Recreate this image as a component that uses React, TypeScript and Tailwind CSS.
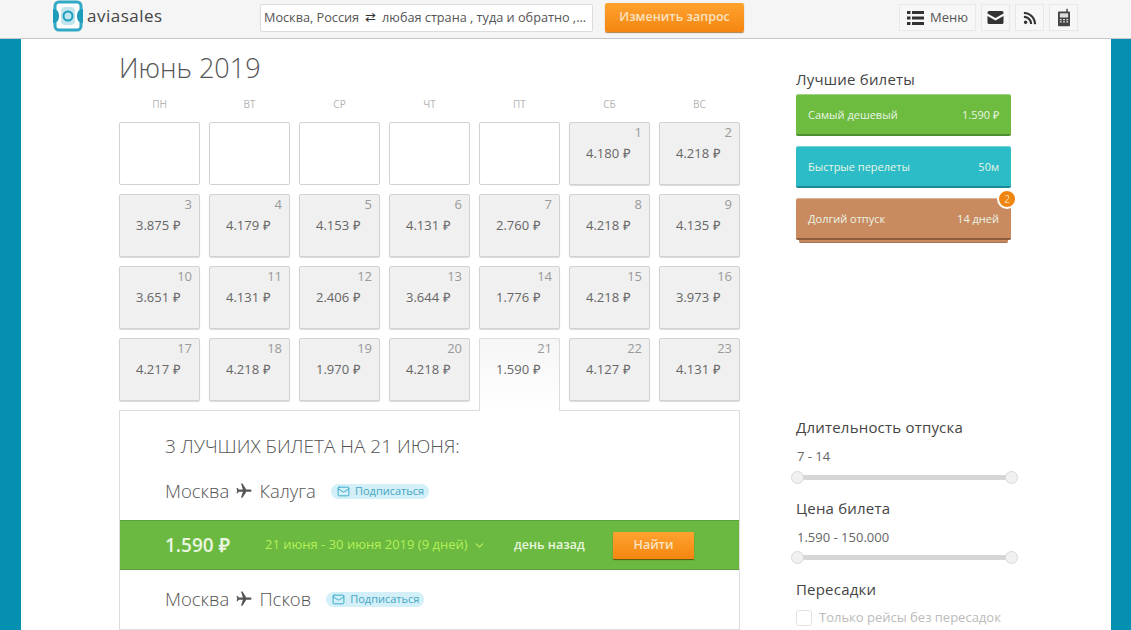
import { ChevronDown, Mail } from 'lucide-react';
import { FaRss } from 'react-icons/fa';
import { MdFlight } from 'react-icons/md';

const weekDays = ['ПН', 'ВТ', 'СР', 'ЧТ', 'ПТ', 'СБ', 'ВС'];

type Day = { day: number; price: string; active?: boolean };

const days: Day[] = [
  { day: 1, price: '4.180' },
  { day: 2, price: '4.218' },
  { day: 3, price: '3.875' },
  { day: 4, price: '4.179' },
  { day: 5, price: '4.153' },
  { day: 6, price: '4.131' },
  { day: 7, price: '2.760' },
  { day: 8, price: '4.218' },
  { day: 9, price: '4.135' },
  { day: 10, price: '3.651' },
  { day: 11, price: '4.131' },
  { day: 12, price: '2.406' },
  { day: 13, price: '3.644' },
  { day: 14, price: '1.776' },
  { day: 15, price: '4.218' },
  { day: 16, price: '3.973' },
  { day: 17, price: '4.217' },
  { day: 18, price: '4.218' },
  { day: 19, price: '1.970' },
  { day: 20, price: '4.218' },
  { day: 21, price: '1.590', active: true },
  { day: 22, price: '4.127' },
  { day: 23, price: '4.131' },
];

function Logo() {
  return (
    <svg width="30" height="32" viewBox="0 0 30 32" className="shrink-0">
      <rect x="2" y="2" width="26" height="28" rx="4" fill="#fff" stroke="#2fa9c6" strokeWidth="3" />
      <rect x="8" y="7" width="14" height="18" rx="4" fill="#bfe6ef" />
      <circle cx="15" cy="16" r="4.500" fill="none" stroke="#1d9cbb" strokeWidth="2" />
      <path d="M0 9 C5 9 6 13 6 16 C6 19 5 23 0 23 Z" fill="#1d9cbb" />
      <path d="M30 9 C25 9 24 13 24 16 C24 19 25 23 30 23 Z" fill="#1d9cbb" />
    </svg>
  );
}

function PhoneIcon() {
  return (
    <svg width="12" height="19" viewBox="0 0 13 19">
      <path d="M9 0h1.500v3H12a1 1 0 0 1 1 1v14a1 1 0 0 1-1 1H1a1 1 0 0 1-1-1V4a1 1 0 0 1 1-1h8z" fill="#444" />
      <rect x="2" y="5" width="9" height="4.500" fill="#ddd" />
      <path d="M2 11h2v1.500H2zM5.500 11h2v1.500h-2zM9 11h2v1.500H9zM2 13.500h2v1.500H2zM5.500 13.500h2v1.500h-2zM9 13.500h2v1.500H9z" fill="#ddd" />
    </svg>
  );
}

function MenuIcon() {
  return (
    <svg width="17" height="14" viewBox="0 0 17 14" fill="#333">
      <rect x="0" y="0" width="3.500" height="3" />
      <rect x="5" y="0" width="12" height="3" />
      <rect x="0" y="5.500" width="3.500" height="3" />
      <rect x="5" y="5.500" width="12" height="3" />
      <rect x="0" y="11" width="3.500" height="3" />
      <rect x="5" y="11" width="12" height="3" />
    </svg>
  );
}

function EnvelopeSolid() {
  return (
    <svg width="17" height="13" viewBox="0 0 16 13" fill="#333">
      <path d="M0 1.500A1.500 1.500 0 0 1 1.500 0h13A1.500 1.500 0 0 1 16 1.500V2.500L8 7 0 2.500z" />
      <path d="M0 5l8 4.500L16 5v6.500a1.500 1.500 0 0 1-1.500 1.500h-13A1.500 1.500 0 0 1 0 11.500z" />
    </svg>
  );
}

function Cell({ day }: { day: Day }) {
  if (day.active) {
    return (
      <div className="relative z-10 h-[73px] rounded-t-[2px] border border-b-0 border-[#dcdcdc] bg-gradient-to-b from-[#f6f6f6] to-white text-[#666]">
        <div className="pr-[7px] text-right text-[13px] leading-[18px] text-[#9a9a9a]">{day.day}</div>
        <div className="mt-[3px] pl-4 text-[13px] leading-[18px]">{day.price} ₽</div>
      </div>
    );
  }
  return (
    <div className="rounded-[2px] border border-[#d2d2d2] bg-[#f0f0f0] text-[#666] shadow-[0_1px_1px_rgba(0,0,0,0.15)]">
      <div className="pr-[7px] text-right text-[13px] leading-[18px] text-[#9a9a9a]">{day.day}</div>
      <div className="mt-[3px] pl-4 text-[13px] leading-[18px]">{day.price} ₽</div>
    </div>
  );
}

function Subscribe() {
  return (
    <span className="flex h-[15px] items-center gap-[5px] rounded-full bg-[#d3f0f8] pr-[5px] pl-[6px] text-[11px] text-[#45a5c2]">
      <Mail size={13} strokeWidth={1.5} className="text-[#1b9dc0]" />
      Подписаться
    </span>
  );
}

function Route({ to }: { to: string }) {
  return (
    <div className="flex items-center gap-[6px] text-[18.500px] leading-6 font-light text-[#555]">
      <span>Москва</span>
      <MdFlight size={18} className="rotate-90 text-[#555]" />
      <span>{to}</span>
    </div>
  );
}

function BestCard({ label, value, color, edge }: { label: string; value: string; color: string; edge: string }) {
  return (
    <div className={`flex h-[42px] items-center justify-between rounded-[2px] border-b-2 pt-[2px] pr-[12px] pl-[12px] text-[11px] font-medium text-[#e9f5e6] shadow-[inset_0_1px_0_rgba(255,255,255,0.35)] ${color} ${edge}`}>
      <span>{label}</span>
      <span>{value}</span>
    </div>
  );
}

function RangeSlider() {
  return (
    <div className="relative h-[14px]">
      <div className="absolute top-[4px] right-[3px] left-[3px] h-[5px] rounded-full bg-[#d6d6d6]" />
      <div className="absolute top-0 left-[-5px] h-[13px] w-[13px] rounded-full border border-[#d8d8d8] bg-[#f1f1f1]" />
      <div className="absolute top-0 right-[-7px] h-[13px] w-[13px] rounded-full border border-[#d8d8d8] bg-[#f1f1f1]" />
    </div>
  );
}

export default function App() {
  return (
    <div className="flex h-[630px] flex-col overflow-hidden bg-[#058fb0] font-['Open_Sans',sans-serif]">
      <header className="flex h-[39px] shrink-0 items-start border-b border-[#c4c8ca] bg-[#f5f5f5]">
        <div className="flex w-[260px] items-center gap-[4px] pl-[53px]">
          <Logo />
          <span className="text-[17px] leading-[32px] tracking-[0.5px] text-[#444]">aviasales</span>
        </div>
        <div className="mt-1 flex h-[28px] w-[333px] items-center gap-[6px] overflow-hidden rounded-[2px] border border-[#dcdcdc] bg-white pl-[3px] text-[12.700px] whitespace-nowrap text-[#555]">
          <span>Москва, Россия</span>
          <span className="text-[#333]">⇄</span>
          <span>любая страна , туда и обратно ,...</span>
        </div>
        <button className="mt-[3px] ml-3 h-[29px] w-[139px] rounded-[2px] bg-gradient-to-b from-[#ffa22e] to-[#f5860f] text-[12.500px] font-semibold text-[#fbe3c0] shadow-[0_1px_1px_rgba(150,80,0,0.7)]">
          Изменить запрос
        </button>
        <div className="ml-auto mt-1 mr-[53px] flex gap-[5px]">
          <div className="flex h-[27px] w-[77px] items-center justify-center gap-[6px] border border-[#e8e8e8] bg-[#f7f7f7] text-[13px] text-[#555]">
            <MenuIcon />
            Меню
          </div>
          <div className="flex h-[27px] w-[29px] items-center justify-center border border-[#e8e8e8] bg-[#f7f7f7]">
            <EnvelopeSolid />
          </div>
          <div className="flex h-[27px] w-[29px] items-center justify-center border border-[#e8e8e8] bg-[#f7f7f7]">
            <FaRss size={14} className="text-[#333]" />
          </div>
          <div className="flex h-[27px] w-[29px] items-center justify-center border border-[#e8e8e8] bg-[#f7f7f7]">
            <PhoneIcon />
          </div>
        </div>
      </header>

      <main className="mr-[20px] ml-[21px] flex flex-1 gap-[56px] overflow-hidden bg-white pl-[98px]">
        <section className="w-[621px] shrink-0">
          <h1 className="pt-[10px] text-[27px] leading-[37px] font-light text-[#555]">Июнь 2019</h1>
          <div className="mt-[11px] grid grid-cols-7 gap-x-[9px] text-center text-[10px] leading-[14px] text-[#b4b4b4]">
            {weekDays.map((d) => (
              <div key={d}>{d}</div>
            ))}
          </div>
          <div className="mt-[11px] grid grid-cols-7 auto-rows-[63px] gap-[9px]">
            {Array.from({ length: 5 }).map((_, i) => (
              <div key={i} className="rounded-[2px] border border-[#d2d2d2] bg-white" />
            ))}
            {days.map((d) => (
              <Cell key={d.day} day={d} />
            ))}
          </div>
          <div className="mt-[9px] h-[220px] border border-[#dcdcdc]">
            <h2 className="pt-[21px] pl-[45px] text-[19px] leading-[28px] font-light text-[#555]">
              3 ЛУЧШИХ БИЛЕТА НА 21 ИЮНЯ:
            </h2>
            <div className="mt-[19px] flex h-[24px] items-center gap-[15px] pl-[45px]">
              <Route to="Калуга" />
              <Subscribe />
            </div>
            <div className="mt-[17px] flex h-[50px] items-center border-y border-[#5da23e] bg-[#6bb940] pl-[45px]">
              <span className="w-[100px] pt-px text-[19px] font-semibold text-[#e8f6df]">1.590 ₽</span>
              <span className="flex w-[249px] items-center gap-[5px] text-[13px] text-[#b4f05a]">
                21 июня - 30 июня 2019 (9 дней)
                <ChevronDown size={13} />
              </span>
              <span className="w-[99px] text-[12.500px] font-semibold text-[#e8f6df]">день назад</span>
              <button className="h-[27px] w-[81px] rounded-[1px] bg-gradient-to-b from-[#ffa22e] to-[#f5860f] text-[12.500px] font-semibold text-[#fbe3c0] shadow-[0_1px_1px_rgba(90,70,0,0.9)]">
                Найти
              </button>
            </div>
            <div className="mt-[17px] flex h-[24px] items-center gap-[15px] pl-[45px]">
              <Route to="Псков" />
              <Subscribe />
            </div>
          </div>
        </section>

        <aside className="flex w-[215px] shrink-0 flex-col">
          <h3 className="pt-[30px] text-[15px] leading-[20px] font-medium tracking-[0.2px] text-[#444]">Лучшие билеты</h3>
          <div className="mt-[5px] flex flex-col gap-[10px]">
            <BestCard label="Самый дешевый" value="1.590 ₽" color="bg-[#6dbb3f]" edge="border-[#4f8f33]" />
            <BestCard label="Быстрые перелеты" value="50м" color="bg-[#2bbcc8]" edge="border-[#1c8a94]" />
            <div className="relative">
              <BestCard label="Долгий отпуск" value="14 дней" color="bg-[#c98a60]" edge="border-[#8a5c3e]" />
              <div className="mx-[3px] h-[3px] rounded-b-[2px] border-b border-[#a8744f] bg-[#c98a60]" />
              <span className="absolute top-[-9px] right-[-6px] flex h-[20px] w-[20px] items-center justify-center rounded-full border-2 border-white bg-[#ef8410] text-[10px] text-[#fbdcae]">
                2
              </span>
            </div>
          </div>

          <h3 className="mt-[174px] text-[15px] leading-[20px] font-medium tracking-[0.2px] text-[#444]">Длительность отпуска</h3>
          <p className="mt-[10px] pl-px text-[13px] leading-[18px] text-[#666]">7 - 14</p>
          <div className="mt-[6px]">
            <RangeSlider />
          </div>
          <h3 className="mt-[13px] text-[15px] leading-[20px] font-medium tracking-[0.2px] text-[#444]">Цена билета</h3>
          <p className="mt-[10px] pl-px text-[13px] leading-[18px] text-[#666]">1.590 - 150.000</p>
          <div className="mt-[5px]">
            <RangeSlider />
          </div>
          <h3 className="mt-[14px] text-[15px] leading-[20px] font-medium tracking-[0.2px] text-[#444]">Пересадки</h3>
          <label className="mt-[9px] flex items-center gap-[7px] text-[13px] whitespace-nowrap text-[#bbb]">
            <span className="h-[16px] w-[16px] rounded-[3px] border border-[#e0e0e0] bg-white" />
            Только рейсы без пересадок
          </label>
        </aside>
      </main>
    </div>
  );
}
